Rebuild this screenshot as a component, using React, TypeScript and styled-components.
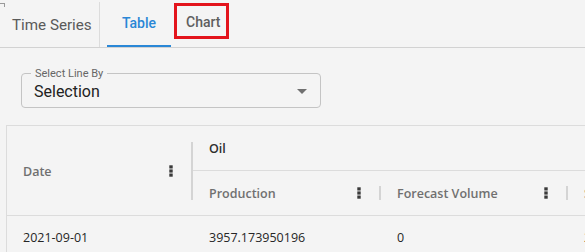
import styled, { createGlobalStyle } from "styled-components";

const GlobalStyle = createGlobalStyle`
    html, body {
        margin: 0;
        padding: 0;
        background: #f4f4f4;
        overflow: hidden;
    }
`;

const Page = styled.div`
    width: 585px;
    height: 252px;
    overflow: hidden;
    background: #f4f4f4;
    font-family: Roboto, "Open Sans", sans-serif;
`;

const TabBar = styled.nav`
    height: 47px;
    display: flex;
    align-items: stretch;
    border-bottom: 1px solid #d2d2d2;
    position: relative;

    &::before {
        content: "";
        position: absolute;
        left: 0;
        top: 3px;
        width: 4px;
        height: 3px;
        border-top: 1px solid #9a9a9a;
        border-right: 1px solid #9a9a9a;
    }
`;

const BarTitle = styled.div`
    display: flex;
    align-items: center;
    width: 100px;
    box-sizing: border-box;
    padding-left: 12px;
    font-size: 15.2px;
    color: #5a5a5a;
    border-right: 1px solid #dcdcdc;
    margin-top: 2px;
`;

const Tab = styled.div<{ $active?: boolean }>`
    display: flex;
    align-items: center;
    justify-content: center;
    margin-left: ${(p) => (p.$active ? "7px" : "3px")};
    width: ${(p) => (p.$active ? "64px" : "auto")};
    font-size: 14px;
    font-weight: 500;
    color: ${(p) => (p.$active ? "#2a87d6" : "#5f5f5f")};
    border-bottom: 2px solid ${(p) => (p.$active ? "#2a87d6" : "transparent")};
    box-sizing: border-box;
    padding-top: 1px;
`;

const Highlight = styled.span`
    display: inline-flex;
    align-items: center;
    box-sizing: border-box;
    height: 36px;
    padding: 3px 6px 0 9px;
    border: 3px solid #e3141c;
    margin-bottom: 5px;
`;

const Controls = styled.div`
    padding: 20px 0 0 21px;
    height: 77px;
    box-sizing: border-box;
`;

const SelectBox = styled.fieldset`
    width: 300px;
    height: 40px;
    margin: 0;
    padding: 0 13px 0 12px;
    box-sizing: border-box;
    border: 1px solid #c4c4c4;
    border-radius: 4px;
    display: flex;
    align-items: center;
`;

const SelectLabel = styled.legend`
    padding: 0 4px;
    margin-left: -3px;
    font-size: 11px;
    color: #666;
    line-height: 1;
`;

const SelectValue = styled.span`
    flex: 1;
    font-size: 16px;
    color: #222;
    margin-top: -4px;
`;

const Caret = styled.span`
    width: 0;
    height: 0;
    border-left: 5px solid transparent;
    border-right: 5px solid transparent;
    border-top: 5px solid #707070;
    margin-top: -4px;
`;

const Grid = styled.div`
    margin-left: 6px;
    width: 700px;
    border-top: 1px solid #dcdcdc;
    border-left: 1px solid #dcdcdc;
    font-family: "Open Sans", "Noto Sans", sans-serif;
    font-size: 12.5px;
`;

const Header = styled.div`
    display: grid;
    grid-template-columns: 186px 188px 187px 188px;
    grid-template-rows: 45px 44px;
    border-bottom: 1px solid #dcdcdc;
`;

const HeadCell = styled.div<{ $span?: boolean; $group?: boolean }>`
    display: flex;
    align-items: center;
    padding-left: 16px;
    font-weight: 600;
    color: ${(p) => (p.$group ? "#2e2e2e" : "#707070")};
    grid-row: ${(p) => (p.$span ? "1 / span 2" : "auto")};
    grid-column: ${(p) => (p.$group ? "2 / -1" : "auto")};
    border-bottom: ${(p) => (p.$group ? "1px solid #dcdcdc" : "none")};
    white-space: nowrap;
    min-width: 0;
`;

const HeadLabel = styled.span`
    flex: 1;
    margin-top: 1px;
`;

const Separator = styled.span<{ $tall?: boolean }>`
    width: 2px;
    height: ${(p) => (p.$tall ? "58px" : "14px")};
    background: #d4d4d4;
    margin-left: 18px;
`;

const Row = styled.div`
    display: grid;
    grid-template-columns: 186px 188px 187px 188px;
    height: 42px;
`;

const Cell = styled.div`
    display: flex;
    align-items: center;
    padding-left: 16px;
    color: #262626;
    white-space: nowrap;
`;

const Kebab = () => (
    <svg width="4" height="12" viewBox="0 0 4 12">
        <rect x="0.3" y="0.3" width="3.4" height="3.2" fill="#3a3a3a" />
        <rect x="0.3" y="4.4" width="3.4" height="3.2" fill="#3a3a3a" />
        <rect x="0.3" y="8.5" width="3.4" height="3.2" fill="#3a3a3a" />
    </svg>
);

const columns = ["Production", "Forecast Volume", "Sales Volume"];
const row = ["2021-09-01", "3957.173950196", "0", "2847.5"];

export default function App() {
    return (
        <Page>
            <GlobalStyle />
            <TabBar>
                <BarTitle>Time Series</BarTitle>
                <Tab $active>Table</Tab>
                <Tab>
                    <Highlight>Chart</Highlight>
                </Tab>
            </TabBar>

            <Controls>
                <SelectBox>
                    <SelectLabel>Select Line By</SelectLabel>
                    <SelectValue>Selection</SelectValue>
                    <Caret />
                </SelectBox>
            </Controls>

            <Grid>
                <Header>
                    <HeadCell $span>
                        <HeadLabel>Date</HeadLabel>
                        <Kebab />
                        <Separator $tall />
                    </HeadCell>
                    <HeadCell $group>
                        <HeadLabel>Oil</HeadLabel>
                    </HeadCell>
                    {columns.map((c) => (
                        <HeadCell key={c}>
                            <HeadLabel>{c}</HeadLabel>
                            <Kebab />
                            <Separator />
                        </HeadCell>
                    ))}
                </Header>
                <Row>
                    {row.map((v, i) => (
                        <Cell key={i}>{v}</Cell>
                    ))}
                </Row>
            </Grid>
        </Page>
    );
}
